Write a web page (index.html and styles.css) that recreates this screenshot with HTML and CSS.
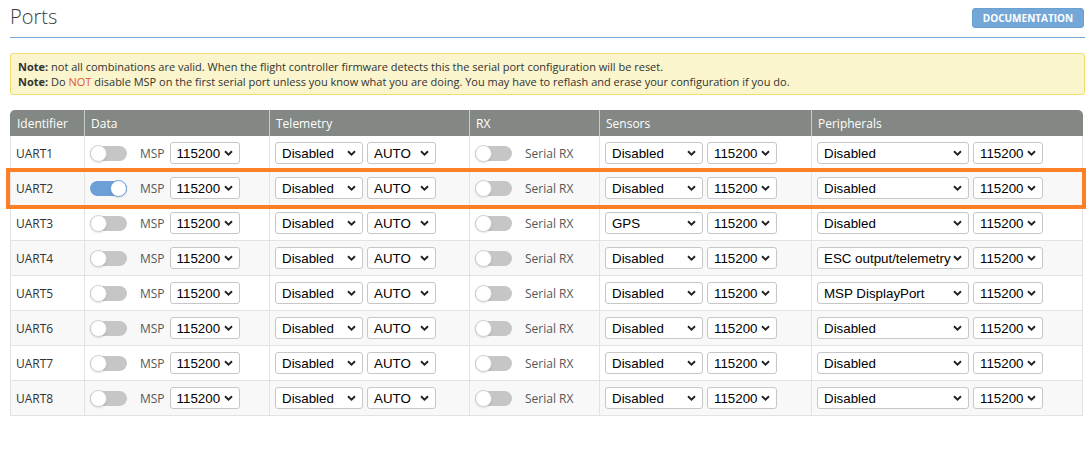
FILE: index.html
```html
<!DOCTYPE html>
<html lang="en">
<head>
<meta charset="utf-8">
<title>Ports</title>
<link rel="stylesheet" href="styles.css">
</head>
<body>
<div class="tab">
  <div class="tab-header">
    <h1 class="title">Ports</h1>
    <a class="doc-btn" href="#">DOCUMENTATION</a>
  </div>

  <div class="note">
    <p><b>Note:</b> not all combinations are valid. When the flight controller firmware detects this the serial port configuration will be reset.</p>
    <p><b>Note:</b> Do <span class="neg">NOT</span> disable MSP on the first serial port unless you know what you are doing. You may have to reflash and erase your configuration if you do.</p>
  </div>

  <div class="table-wrap">
    <table class="ports">
      <thead>
        <tr>
          <th class="c-id">Identifier</th>
          <th class="c-data">Data</th>
          <th class="c-tel">Telemetry</th>
          <th class="c-rx">RX</th>
          <th class="c-sens">Sensors</th>
          <th class="c-per">Peripherals</th>
        </tr>
      </thead>
      <tbody>
        <tr>
          <td>UART1</td>
          <td><div class="cell"><span class="switch"><span class="knob"></span></span><span class="lbl">MSP</span><select class="s-baud"><option>115200</option></select></div></td>
          <td><div class="cell"><select class="s-tel"><option>Disabled</option></select><select class="s-auto"><option>AUTO</option></select></div></td>
          <td><div class="cell"><span class="switch"><span class="knob"></span></span><span class="lbl">Serial RX</span></div></td>
          <td><div class="cell"><select class="s-sens"><option>Disabled</option></select><select class="s-sbaud"><option>115200</option></select></div></td>
          <td><div class="cell"><select class="s-per"><option>Disabled</option></select><select class="s-pbaud"><option>115200</option></select></div></td>
        </tr>
        <tr>
          <td>UART2</td>
          <td><div class="cell"><span class="switch on"><span class="knob"></span></span><span class="lbl">MSP</span><select class="s-baud"><option>115200</option></select></div></td>
          <td><div class="cell"><select class="s-tel"><option>Disabled</option></select><select class="s-auto"><option>AUTO</option></select></div></td>
          <td><div class="cell"><span class="switch"><span class="knob"></span></span><span class="lbl">Serial RX</span></div></td>
          <td><div class="cell"><select class="s-sens"><option>Disabled</option></select><select class="s-sbaud"><option>115200</option></select></div></td>
          <td><div class="cell"><select class="s-per"><option>Disabled</option></select><select class="s-pbaud"><option>115200</option></select></div></td>
        </tr>
        <tr>
          <td>UART3</td>
          <td><div class="cell"><span class="switch"><span class="knob"></span></span><span class="lbl">MSP</span><select class="s-baud"><option>115200</option></select></div></td>
          <td><div class="cell"><select class="s-tel"><option>Disabled</option></select><select class="s-auto"><option>AUTO</option></select></div></td>
          <td><div class="cell"><span class="switch"><span class="knob"></span></span><span class="lbl">Serial RX</span></div></td>
          <td><div class="cell"><select class="s-sens"><option>GPS</option></select><select class="s-sbaud"><option>115200</option></select></div></td>
          <td><div class="cell"><select class="s-per"><option>Disabled</option></select><select class="s-pbaud"><option>115200</option></select></div></td>
        </tr>
        <tr>
          <td>UART4</td>
          <td><div class="cell"><span class="switch"><span class="knob"></span></span><span class="lbl">MSP</span><select class="s-baud"><option>115200</option></select></div></td>
          <td><div class="cell"><select class="s-tel"><option>Disabled</option></select><select class="s-auto"><option>AUTO</option></select></div></td>
          <td><div class="cell"><span class="switch"><span class="knob"></span></span><span class="lbl">Serial RX</span></div></td>
          <td><div class="cell"><select class="s-sens"><option>Disabled</option></select><select class="s-sbaud"><option>115200</option></select></div></td>
          <td><div class="cell"><select class="s-per"><option>ESC output/telemetry</option></select><select class="s-pbaud"><option>115200</option></select></div></td>
        </tr>
        <tr>
          <td>UART5</td>
          <td><div class="cell"><span class="switch"><span class="knob"></span></span><span class="lbl">MSP</span><select class="s-baud"><option>115200</option></select></div></td>
          <td><div class="cell"><select class="s-tel"><option>Disabled</option></select><select class="s-auto"><option>AUTO</option></select></div></td>
          <td><div class="cell"><span class="switch"><span class="knob"></span></span><span class="lbl">Serial RX</span></div></td>
          <td><div class="cell"><select class="s-sens"><option>Disabled</option></select><select class="s-sbaud"><option>115200</option></select></div></td>
          <td><div class="cell"><select class="s-per"><option>MSP DisplayPort</option></select><select class="s-pbaud"><option>115200</option></select></div></td>
        </tr>
        <tr>
          <td>UART6</td>
          <td><div class="cell"><span class="switch"><span class="knob"></span></span><span class="lbl">MSP</span><select class="s-baud"><option>115200</option></select></div></td>
          <td><div class="cell"><select class="s-tel"><option>Disabled</option></select><select class="s-auto"><option>AUTO</option></select></div></td>
          <td><div class="cell"><span class="switch"><span class="knob"></span></span><span class="lbl">Serial RX</span></div></td>
          <td><div class="cell"><select class="s-sens"><option>Disabled</option></select><select class="s-sbaud"><option>115200</option></select></div></td>
          <td><div class="cell"><select class="s-per"><option>Disabled</option></select><select class="s-pbaud"><option>115200</option></select></div></td>
        </tr>
        <tr>
          <td>UART7</td>
          <td><div class="cell"><span class="switch"><span class="knob"></span></span><span class="lbl">MSP</span><select class="s-baud"><option>115200</option></select></div></td>
          <td><div class="cell"><select class="s-tel"><option>Disabled</option></select><select class="s-auto"><option>AUTO</option></select></div></td>
          <td><div class="cell"><span class="switch"><span class="knob"></span></span><span class="lbl">Serial RX</span></div></td>
          <td><div class="cell"><select class="s-sens"><option>Disabled</option></select><select class="s-sbaud"><option>115200</option></select></div></td>
          <td><div class="cell"><select class="s-per"><option>Disabled</option></select><select class="s-pbaud"><option>115200</option></select></div></td>
        </tr>
        <tr>
          <td>UART8</td>
          <td><div class="cell"><span class="switch"><span class="knob"></span></span><span class="lbl">MSP</span><select class="s-baud"><option>115200</option></select></div></td>
          <td><div class="cell"><select class="s-tel"><option>Disabled</option></select><select class="s-auto"><option>AUTO</option></select></div></td>
          <td><div class="cell"><span class="switch"><span class="knob"></span></span><span class="lbl">Serial RX</span></div></td>
          <td><div class="cell"><select class="s-sens"><option>Disabled</option></select><select class="s-sbaud"><option>115200</option></select></div></td>
          <td><div class="cell"><select class="s-per"><option>Disabled</option></select><select class="s-pbaud"><option>115200</option></select></div></td>
        </tr>
      </tbody>
    </table>
    <div class="highlight"></div>
  </div>
</div>
</body>
</html>
```

FILE: styles.css
```css
* { box-sizing: border-box; }

html, body {
  margin: 0;
  background: #fff;
}

body {
  font-family: "Open Sans", "DejaVu Sans", sans-serif;
  color: #333;
}

.tab {
  padding: 0 6px 0 10px;
}

.tab-header {
  display: flex;
  justify-content: space-between;
  align-items: flex-start;
  height: 38px;
  border-bottom: 1px solid #78a8d8;
}

.title {
  margin: 5px 0 0 0;
  font-size: 20px;
  line-height: 24px;
  font-weight: 300;
  color: #3a3a3a;
}

.doc-btn {
  margin-top: 8px;
  margin-right: 1px;
  width: 112px;
  height: 20px;
  display: flex;
  align-items: center;
  justify-content: center;
  background: #72a7d7;
  border: 1px solid #6a9fd1;
  border-radius: 3px;
  color: #fff;
  font-size: 10px;
  font-weight: 700;
  text-decoration: none;
}

.note {
  margin-top: 15px;
  padding: 5px 7px;
  background: #faf5cc;
  border: 1px solid #f1dc6c;
  border-radius: 3px;
  font-size: 11px;
  line-height: 15px;
  color: #333;
}

.note p { margin: 0; }
.note b { font-weight: 700; }
.neg { color: #e2553c; }

.table-wrap {
  position: relative;
  margin-top: 15px;
  width: 1073px;
}

.ports {
  width: 1073px;
  table-layout: fixed;
  border-collapse: separate;
  border-spacing: 0;
  font-size: 12px;
}

.ports th {
  height: 26px;
  padding: 0 6px;
  background: #838884;
  color: #fff;
  font-weight: 400;
  text-align: left;
  border-left: 1px solid #c9cbc9;
}

.ports th:first-child {
  border-left-color: #838884;
  border-top-left-radius: 5px;
}

.ports th:last-child {
  border-top-right-radius: 5px;
}

.c-id { width: 74px; }
.c-data { width: 185px; }
.c-tel { width: 200px; }
.c-rx { width: 130px; }
.c-sens { width: 212px; }
.c-per { width: 272px; }

.ports td {
  height: 35px;
  padding: 0 5px;
  border-left: 1px solid #e2e2e2;
  border-bottom: 1px solid #e2e2e2;
  color: #333;
  vertical-align: middle;
}

.ports td:last-child {
  border-right: 1px solid #e2e2e2;
}

.ports tbody tr:nth-child(odd) { background: #fff; }
.ports tbody tr:nth-child(even) { background: #f8f8f8; }

.cell {
  display: flex;
  align-items: center;
  gap: 4px;
}

.lbl {
  color: #575757;
  margin-left: 9px;
  margin-right: 1px;
}

.switch {
  width: 37px;
  height: 15px;
  border-radius: 8px;
  background: #c6c6c6;
  display: flex;
  align-items: center;
  justify-content: flex-start;
  flex: none;
}

.switch.on {
  background: #6c9fd5;
  justify-content: flex-end;
}

.knob {
  width: 17px;
  height: 17px;
  border-radius: 50%;
  background: #fff;
  border: 1px solid #cfcfcf;
  box-shadow: 0 1px 2px rgba(0, 0, 0, 0.12);
}

.switch.on .knob {
  border-color: #6c9fd5;
}

select {
  -webkit-appearance: none;
  appearance: none;
  height: 22px;
  margin: 0;
  padding: 0 0 0 6px;
  font-family: "Liberation Sans", Arial, sans-serif;
  font-size: 13.333px;
  color: #000;
  background-color: #fff;
  background-image: url("data:image/svg+xml,%3Csvg xmlns='http://www.w3.org/2000/svg' width='9' height='6' viewBox='0 0 9 6'%3E%3Cpath d='M1 1.2l3.5 3.4L8 1.2' fill='none' stroke='%23222' stroke-width='1.9'/%3E%3C/svg%3E");
  background-repeat: no-repeat;
  background-position: right 6px center;
  background-size: 9px 6px;
  border: 1px solid #c7c7c7;
  border-radius: 3px;
  flex: none;
}

.s-baud { width: 70px; }
.s-tel { width: 88px; }
.s-auto { width: 69px; }
.s-sens { width: 98px; }
.s-sbaud { width: 70px; }
.s-per { width: 152px; }
.s-pbaud { width: 70px; }

.highlight {
  position: absolute;
  left: -4px;
  right: -3px;
  top: 58px;
  height: 41px;
  border: 4px solid #fd7f28;
  pointer-events: none;
}
```
